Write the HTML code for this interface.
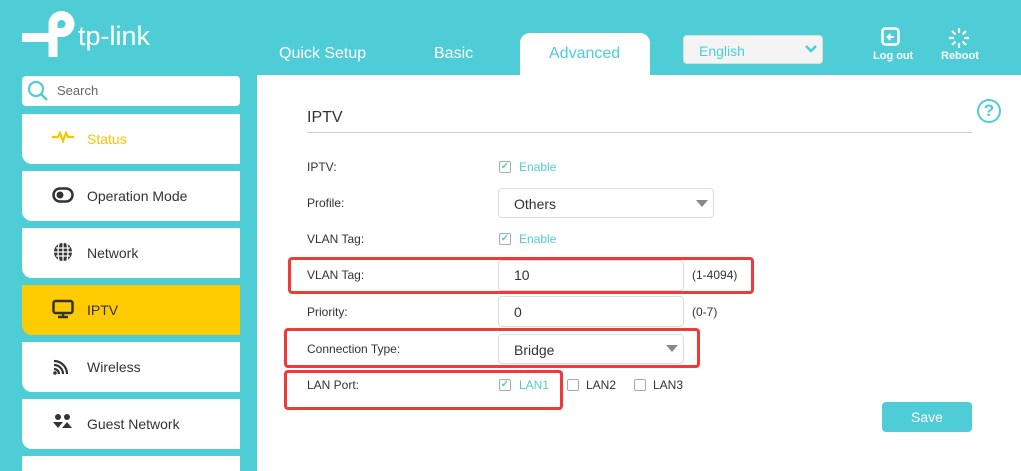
<!DOCTYPE html>
<html><head><meta charset="utf-8"><style>
*{margin:0;padding:0;box-sizing:border-box}
html,body{width:1021px;height:471px;overflow:hidden}
body{background:#4ecdd7;font-family:"Liberation Sans",Arial,sans-serif;position:relative}
.a{position:absolute}
.card{position:absolute;left:22px;width:218px;height:50px;background:#fff;border-radius:0 0 0 10px;font-size:14px;color:#333}
.card span{position:absolute;left:65px;top:17px}
.card svg{position:absolute;left:30px;top:14px}
.lbl{position:absolute;left:307px;font-size:12px;color:#333}
.inp{position:absolute;left:498px;border:1px solid #ddd;border-radius:4px;background:#fff;font-size:14px;color:#333;padding-left:15px}
.cb{position:absolute;width:12px;height:12px;border:1px solid #aaa;border-radius:2px;background:#fff}
.ck{color:#4ecdd7;font-size:10px;line-height:10px;text-align:center;font-weight:bold}
.en{position:absolute;font-size:12px;color:#4ecdd7}
.red{position:absolute;border:3px solid #f03a3a;border-radius:4px}
.tri{position:absolute;width:0;height:0;border-left:6px solid transparent;border-right:6px solid transparent;border-top:7px solid #888}
</style></head><body>
<svg class="a" style="left:0;top:0" width="160" height="64">
<path d="M22 37.5 H53" stroke="#fff" stroke-width="9" fill="none"/>
<path d="M53 57 V24 A8.5 8.5 0 0 1 70 24 A8.5 8.5 0 0 1 61.5 32.5 H55" stroke="#fff" stroke-width="9" fill="none"/>
<text x="78" y="45" fill="#fff" font-family="Liberation Sans" font-size="27">tp-link</text>
</svg>
<div class="a" style="left:279px;top:45px;font-size:16px;color:#fff">Quick Setup</div>
<div class="a" style="left:434px;top:45px;font-size:16px;color:#fff">Basic</div>
<div class="a" style="left:520px;top:33px;width:130px;height:45px;background:#fff;border-radius:10px 10px 0 0"></div>
<div class="a" style="left:549px;top:45px;font-size:16px;color:#4ecdd7">Advanced</div>
<div class="a" style="left:683px;top:35px;width:140px;height:29px;background:#f4f4f4;border:1px solid #ddd;border-radius:4px;font-size:14px;color:#4ecdd7;padding:7px 0 0 15px">English</div>
<svg class="a" style="left:805px;top:44px" width="12" height="10"><path d="M1 2 L6 7 L11 2" stroke="#4ecdd7" stroke-width="2.5" fill="none"/></svg>
<svg class="a" style="left:881px;top:27px" width="20" height="20"><rect x="1.5" y="1.5" width="16" height="16" rx="3" fill="none" stroke="#fff" stroke-width="2.5"/><path d="M13 10 H7 M9.5 7 L6.5 10 L9.5 13" stroke="#fff" stroke-width="2" fill="none"/></svg>
<div class="a" style="left:873px;top:50px;font-size:11px;color:#fff;font-weight:bold">Log out</div>
<svg class="a" style="left:948px;top:27px" width="22" height="22" stroke="#fff" stroke-width="2.2"><path d="M11 1 V6 M11 16 V21 M1 11 H6 M16 11 H21 M4 4 L7.5 7.5 M14.5 14.5 L18 18 M18 4 L14.5 7.5 M7.5 14.5 L4 18"/></svg>
<div class="a" style="left:941px;top:50px;font-size:11px;color:#fff;font-weight:bold">Reboot</div>
<div class="a" style="left:257px;top:75px;width:764px;height:396px;background:#fff"></div>
<div class="a" style="left:22px;top:76px;width:218px;height:30px;background:#fff;border-radius:4px"></div>
<svg class="a" style="left:27px;top:80px" width="22" height="22"><circle cx="9" cy="9" r="7" fill="none" stroke="#4ecdd7" stroke-width="2.2"/><path d="M14 14 L20 20" stroke="#4ecdd7" stroke-width="2.5"/></svg>
<div class="a" style="left:57px;top:83px;font-size:13px;color:#666">Search</div>
<div class="card" style="top:114px"><svg width="22" height="16"><path d="M0 9 H6 L8 5 L11 13 L14 5 L16 9 H22" stroke="#f7c600" stroke-width="2.2" fill="none"/></svg><span style="color:#f7c600">Status</span></div>
<div class="card" style="top:171px"><svg width="22" height="20"><rect x="1.5" y="3.5" width="19" height="13" rx="6.5" fill="none" stroke="#333" stroke-width="2.5"/><circle cx="8" cy="10" r="3.5" fill="#333"/></svg><span>Operation Mode</span></div>
<div class="card" style="top:228px"><svg width="22" height="22"><circle cx="11" cy="10" r="9" fill="#333"/><path d="M2 10 H20 M11 1 V19 M4 6 H18 M4 14 H18 M7 2 Q5 10 7 18 M15 2 Q17 10 15 18" stroke="#fff" stroke-width="1.3" fill="none"/></svg><span>Network</span></div>
<div class="card" style="top:285px;background:#fecb00"><svg width="22" height="20"><rect x="1.5" y="2" width="19" height="12" rx="2" fill="none" stroke="#333" stroke-width="2.5"/><path d="M6 18 H16 M11 14 V18" stroke="#333" stroke-width="2.5"/></svg><span>IPTV</span></div>
<div class="card" style="top:342px"><svg width="22" height="20"><path d="M2 5 A13 13 0 0 1 15 18 M2 9 A9 9 0 0 1 11 18 M2 13 A5 5 0 0 1 7 18" stroke="#333" stroke-width="2.2" fill="none"/><circle cx="3" cy="17" r="1.8" fill="#333"/></svg><span>Wireless</span></div>
<div class="card" style="top:399px"><svg width="24" height="20"><circle cx="6" cy="4" r="3" fill="#333"/><circle cx="15" cy="4" r="3" fill="#333"/><path d="M1 9 L6 15 L11 9 Z M10 15 L15 9 L20 15 Z" fill="#333"/></svg><span>Guest Network</span></div>
<div class="a" style="left:22px;top:456px;width:218px;height:15px;background:#fff"></div>
<div class="a" style="left:307px;top:109px;font-size:16px;color:#333">IPTV</div>
<div class="a" style="left:307px;top:132px;width:665px;height:1px;background:#ccc"></div>
<div class="a" style="left:977px;top:99px;width:24px;height:24px;border:2.5px solid #4ecdd7;border-radius:50%;color:#4ecdd7;font-weight:bold;font-size:17px;text-align:center;line-height:19px">?</div>
<div class="lbl" style="top:160px">IPTV:</div>
<div class="cb ck" style="left:499px;top:161px">✓</div><div class="en" style="left:519px;top:160px">Enable</div>
<div class="lbl" style="top:196px">Profile:</div>
<div class="inp" style="top:188px;width:216px;height:30px;padding-top:7px">Others</div><div class="tri" style="left:696px;top:200px"></div>
<div class="lbl" style="top:232px">VLAN Tag:</div>
<div class="cb ck" style="left:499px;top:233px">✓</div><div class="en" style="left:519px;top:232px">Enable</div>
<div class="red" style="left:288px;top:257px;width:466px;height:37px"></div>
<div class="lbl" style="top:268px">VLAN Tag:</div>
<div class="inp" style="top:260px;width:186px;height:31px;padding-top:6px">10</div>
<div class="a" style="left:692px;top:268px;font-size:12px;color:#333">(1-4094)</div>
<div class="lbl" style="top:305px">Priority:</div>
<div class="inp" style="top:296px;width:186px;height:31px;padding-top:7px">0</div>
<div class="a" style="left:692px;top:305px;font-size:12px;color:#333">(0-7)</div>
<div class="red" style="left:284px;top:328px;width:416px;height:40px"></div>
<div class="lbl" style="top:342px">Connection Type:</div>
<div class="inp" style="top:334px;width:186px;height:30px;padding-top:7px">Bridge</div><div class="tri" style="left:666px;top:345px"></div>
<div class="red" style="left:284px;top:370px;width:279px;height:40px"></div>
<div class="lbl" style="top:378px">LAN Port:</div>
<div class="cb ck" style="left:499px;top:379px">✓</div><div class="en" style="left:519px;top:378px">LAN1</div>
<div class="cb" style="left:567px;top:379px"></div><div class="a" style="left:586px;top:378px;font-size:12px;color:#333">LAN2</div>
<div class="cb" style="left:634px;top:379px"></div><div class="a" style="left:653px;top:378px;font-size:12px;color:#333">LAN3</div>
<div class="a" style="left:882px;top:402px;width:90px;height:30px;background:#4ecdd7;border-radius:4px;color:#fff;font-size:14px;text-align:center;line-height:30px">Save</div>
</body></html>
